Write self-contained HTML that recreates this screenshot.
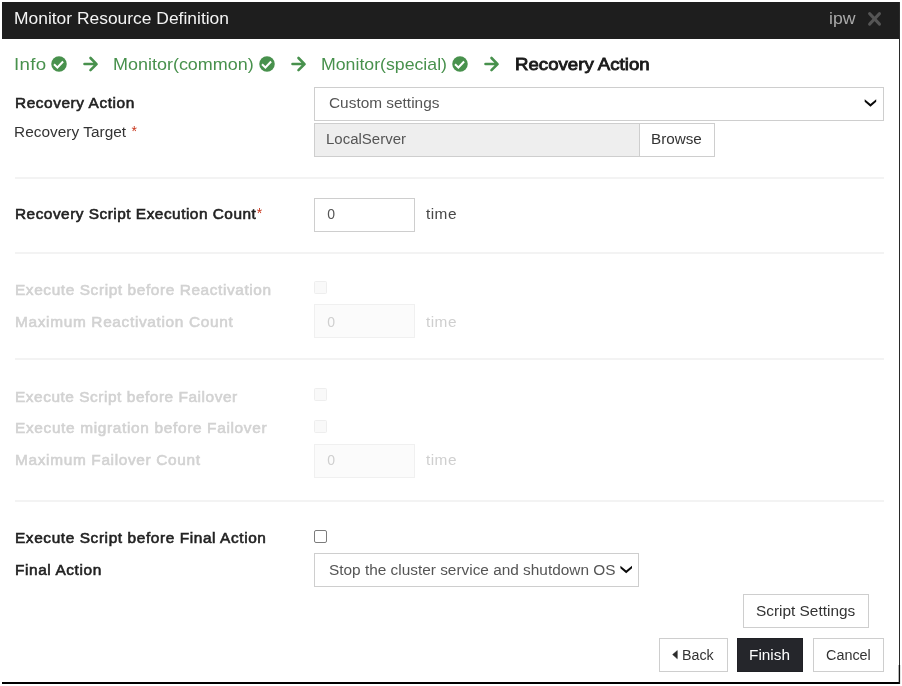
<!DOCTYPE html>
<html lang="en">
<head>
<meta charset="utf-8">
<title>Monitor Resource Definition</title>
<style>
*{box-sizing:border-box;margin:0;padding:0}
html,body{width:902px;height:686px;background:#fff;overflow:hidden}
body{position:relative;font-family:"Liberation Sans",sans-serif;font-size:14px;color:#333}
.t{position:absolute;line-height:1;white-space:pre;transform-origin:0 0}
.b{position:absolute}
.hr{position:absolute;left:15px;width:869px;height:2px;background:#f3f3f3}
.box{position:absolute;border:1px solid #cecece;background:#fff}
.dbox{position:absolute;border:1px solid #f0f0f0;background:#fbfbfb}
.dchk{position:absolute;width:13px;height:13px;border:1px solid #eee;background:#f9f9f9;border-radius:1.5px;left:314px}
svg{position:absolute;overflow:visible}
</style>
</head>
<body>
<!-- dialog frame -->
<div class="b" style="left:2px;top:2px;width:898px;height:36.6px;background:#1e1e1e"></div>
<div class="b" style="left:2px;top:682px;width:898px;height:2px;background:#000"></div>

<!-- close X -->
<svg style="left:868.4px;top:12.2px" width="13.1" height="13.8" viewBox="0 0 13 13" preserveAspectRatio="none"><path d="M1.6 1.6 L11.4 11.4 M11.4 1.6 L1.6 11.4" stroke="#555" stroke-width="3" stroke-linecap="round" fill="none"/></svg>

<!-- breadcrumb icons -->
<svg style="left:51.4px;top:56.1px" width="16" height="16" viewBox="0 0 16 16"><circle cx="8" cy="8" r="7.75" fill="#48914d"/><path d="M3 8.35 L6.4 11.55 L12.1 5.55" stroke="#fff" stroke-width="2" fill="none"/></svg>
<svg style="left:259.4px;top:56.1px" width="16" height="16" viewBox="0 0 16 16"><circle cx="8" cy="8" r="7.75" fill="#48914d"/><path d="M3 8.35 L6.4 11.55 L12.1 5.55" stroke="#fff" stroke-width="2" fill="none"/></svg>
<svg style="left:452.4px;top:56.1px" width="16" height="16" viewBox="0 0 16 16"><circle cx="8" cy="8" r="7.75" fill="#48914d"/><path d="M3 8.35 L6.4 11.55 L12.1 5.55" stroke="#fff" stroke-width="2" fill="none"/></svg>

<svg style="left:81.9px;top:55px" width="18" height="18" viewBox="0 0 18 18"><path d="M2.5 9.05 H14.3 M8.5 3 L14.55 9.05 L8.5 15.1" stroke="#48914d" stroke-width="2.6" stroke-linecap="round" stroke-linejoin="round" fill="none"/></svg>
<svg style="left:289.9px;top:55px" width="18" height="18" viewBox="0 0 18 18"><path d="M2.5 9.05 H14.3 M8.5 3 L14.55 9.05 L8.5 15.1" stroke="#48914d" stroke-width="2.6" stroke-linecap="round" stroke-linejoin="round" fill="none"/></svg>
<svg style="left:483.1px;top:55px" width="18" height="18" viewBox="0 0 18 18"><path d="M2.5 9.05 H14.3 M8.5 3 L14.55 9.05 L8.5 15.1" stroke="#48914d" stroke-width="2.6" stroke-linecap="round" stroke-linejoin="round" fill="none"/></svg>

<!-- separators -->
<div class="hr" style="top:177px"></div>
<div class="hr" style="top:252px"></div>
<div class="hr" style="top:358px"></div>
<div class="hr" style="top:500px"></div>

<!-- controls -->
<div class="box" style="left:314px;top:87px;width:570px;height:34px"></div>

<div class="box" style="left:314px;top:123px;width:326px;height:34px;background:#eee"></div>
<div class="box" style="left:639px;top:123px;width:76px;height:34px"></div>

<div class="box" style="left:314px;top:198px;width:101px;height:34px"></div>

<div class="dchk" style="top:281px"></div>
<div class="dbox" style="left:314px;top:304px;width:101px;height:34px"></div>

<div class="dchk" style="top:388px"></div>
<div class="dchk" style="top:420px"></div>
<div class="dbox" style="left:314px;top:444px;width:101px;height:34px"></div>

<div class="b" style="left:314px;top:530px;width:13px;height:13px;border:1px solid #7c7c7c;background:#fff;border-radius:2px"></div>
<div class="box" style="left:314px;top:553px;width:325px;height:34px"></div>

<!-- buttons -->
<div class="box" style="left:743px;top:594px;width:126px;height:34px"></div>
<div class="box" style="left:659px;top:638px;width:69px;height:34px"></div>
<div class="b" style="left:737px;top:638px;width:66px;height:34px;background:#25262b;border:1px solid #202126"></div>
<div class="box" style="left:813px;top:638px;width:71px;height:34px"></div>


<!-- overlay icons -->
<svg style="left:0;top:0" width="902" height="686"><path d="M864.7 99.2 L870.45 104 L876.2 99.2 V101.7 L870.45 106.7 L864.7 101.7 Z" fill="#0a0a0a"/><path d="M620.4 565.7 L626.2 570.5 L632 565.7 V568.2 L626.2 573.3 L620.4 568.2 Z" fill="#0a0a0a"/><path d="M672.6 654.6 L677.3 650.6 V658.7 Z" fill="#2b2b2b" stroke="#2b2b2b" stroke-width="0.5" stroke-linejoin="round"/><rect x="899" y="2" width="1" height="663" fill="#2a2a2a"/><rect x="898.7" y="665" width="1.4" height="19" fill="#111"/></svg>
<div id="txt" style="position:absolute;left:0;top:0;width:902px;height:686px;will-change:transform">
<span class="t" style="left:14.48px;top:9.61px;font-size:17px;font-weight:400;color:#f4f4f4;letter-spacing:0.000px;transform:scaleX(1.0249)">Monitor Resource Definition</span>
<span class="t" style="left:828.66px;top:9.61px;font-size:17px;font-weight:400;color:#a9a9a9;letter-spacing:-0.000px;transform:scaleX(1.0384)">ipw</span>
<span class="t" style="left:13.90px;top:55.61px;font-size:17px;font-weight:400;color:#48914d;letter-spacing:0.275px;transform:scaleX(1.1000)">Info</span>
<span class="t" style="left:112.94px;top:55.61px;font-size:17px;font-weight:400;color:#48914d;letter-spacing:0.000px;transform:scaleX(1.0568)">Monitor(common)</span>
<span class="t" style="left:320.96px;top:55.61px;font-size:17px;font-weight:400;color:#48914d;letter-spacing:0.000px;transform:scaleX(1.0418)">Monitor(special)</span>
<span class="t" style="left:514.87px;top:55.61px;font-size:17px;font-weight:400;color:#1a1a1a;letter-spacing:0.000px;transform:scaleX(1.0960);-webkit-text-stroke:0.85px #1a1a1a">Recovery Action</span>
<span class="t" style="left:14.50px;top:96.15px;font-size:14px;font-weight:400;color:#222;letter-spacing:0.515px;transform:scaleX(1.1000);-webkit-text-stroke:0.55px #222">Recovery Action</span>
<span class="t" style="left:14.20px;top:125.15px;font-size:14px;font-weight:400;color:#333;letter-spacing:0.020px;transform:scaleX(1.1000)">Recovery Target</span>
<span class="t" style="left:14.50px;top:207.45px;font-size:14px;font-weight:400;color:#222;letter-spacing:0.449px;transform:scaleX(1.1000);-webkit-text-stroke:0.55px #222">Recovery Script Execution Count</span>
<span class="t" style="left:14.50px;top:283.15px;font-size:14px;font-weight:400;color:#d2d2d2;letter-spacing:0.546px;transform:scaleX(1.1000);-webkit-text-stroke:0.55px #d2d2d2">Execute Script before Reactivation</span>
<span class="t" style="left:14.50px;top:314.85px;font-size:14px;font-weight:400;color:#d2d2d2;letter-spacing:0.605px;transform:scaleX(1.1000);-webkit-text-stroke:0.55px #d2d2d2">Maximum Reactivation Count</span>
<span class="t" style="left:14.50px;top:390.45px;font-size:14px;font-weight:400;color:#d2d2d2;letter-spacing:0.497px;transform:scaleX(1.1000);-webkit-text-stroke:0.55px #d2d2d2">Execute Script before Failover</span>
<span class="t" style="left:14.50px;top:421.45px;font-size:14px;font-weight:400;color:#d2d2d2;letter-spacing:0.604px;transform:scaleX(1.1000);-webkit-text-stroke:0.55px #d2d2d2">Execute migration before Failover</span>
<span class="t" style="left:14.50px;top:453.45px;font-size:14px;font-weight:400;color:#d2d2d2;letter-spacing:0.602px;transform:scaleX(1.1000);-webkit-text-stroke:0.55px #d2d2d2">Maximum Failover Count</span>
<span class="t" style="left:14.50px;top:531.45px;font-size:14px;font-weight:400;color:#222;letter-spacing:0.545px;transform:scaleX(1.1000);-webkit-text-stroke:0.55px #222">Execute Script before Final Action</span>
<span class="t" style="left:14.50px;top:563.45px;font-size:14px;font-weight:400;color:#222;letter-spacing:0.546px;transform:scaleX(1.1000);-webkit-text-stroke:0.55px #222">Final Action</span>
<span class="t" style="left:329.10px;top:96.15px;font-size:14px;font-weight:400;color:#555;letter-spacing:-0.000px;transform:scaleX(1.0999)">Custom settings</span>
<span class="t" style="left:326.43px;top:132.15px;font-size:14px;font-weight:400;color:#555;letter-spacing:0.000px;transform:scaleX(1.0704)">LocalServer</span>
<span class="t" style="left:650.61px;top:132.15px;font-size:14px;font-weight:400;color:#333;letter-spacing:-0.000px;transform:scaleX(1.0894)">Browse</span>
<span class="t" style="left:327.30px;top:207.45px;font-size:14px;font-weight:400;color:#555;letter-spacing:0.000px">0</span>
<span class="t" style="left:426.00px;top:207.45px;font-size:14px;font-weight:400;color:#484848;letter-spacing:0.416px;transform:scaleX(1.1000)">time</span>
<span class="t" style="left:327.30px;top:314.85px;font-size:14px;font-weight:400;color:#cfcfcf;letter-spacing:0.000px">0</span>
<span class="t" style="left:426.00px;top:314.85px;font-size:14px;font-weight:400;color:#cfcfcf;letter-spacing:0.416px;transform:scaleX(1.1000)">time</span>
<span class="t" style="left:327.30px;top:453.45px;font-size:14px;font-weight:400;color:#cfcfcf;letter-spacing:0.000px">0</span>
<span class="t" style="left:426.00px;top:453.45px;font-size:14px;font-weight:400;color:#cfcfcf;letter-spacing:0.416px;transform:scaleX(1.1000)">time</span>
<span class="t" style="left:329.10px;top:563.45px;font-size:14px;font-weight:400;color:#555;letter-spacing:0.000px;transform:scaleX(1.0989)">Stop the cluster service and shutdown OS</span>
<span class="t" style="left:756.30px;top:604.25px;font-size:14px;font-weight:400;color:#333;letter-spacing:0.000px;transform:scaleX(1.0990)">Script Settings</span>
<span class="t" style="left:681.68px;top:647.85px;font-size:14px;font-weight:400;color:#333;letter-spacing:0.000px;transform:scaleX(1.0185)">Back</span>
<span class="t" style="left:749.40px;top:647.85px;font-size:14px;font-weight:400;color:#fff;letter-spacing:0.000px;transform:scaleX(1.0968)">Finish</span>
<span class="t" style="left:825.80px;top:647.85px;font-size:14px;font-weight:400;color:#333;letter-spacing:-0.000px;transform:scaleX(1.0283)">Cancel</span>
<span class="t" style="left:131.6px;top:123.7px;font-size:14px;color:#c8341a;font-weight:400">*</span>
<span class="t" style="left:256.7px;top:205.8px;font-size:14px;color:#c8341a;font-weight:400">*</span>
</div>
</body>
</html>
